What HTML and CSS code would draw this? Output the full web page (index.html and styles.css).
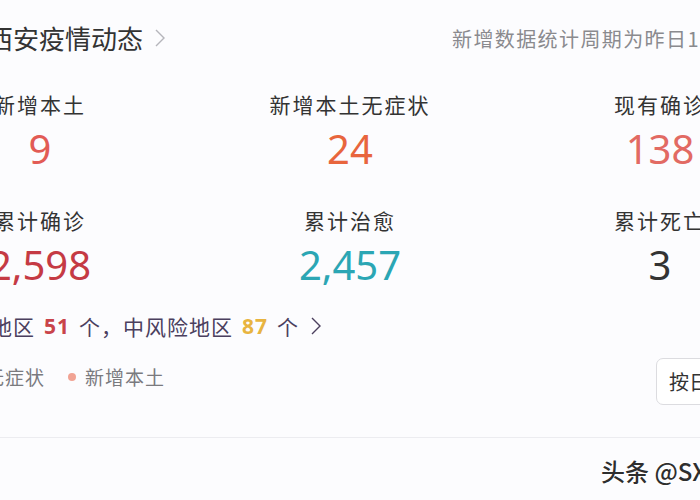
FILE: index.html
```html
<!DOCTYPE html>
<html lang="zh-CN">
<head>
  <meta charset="UTF-8" />
  <meta name="viewport" content="width=device-width, initial-scale=1.0"/>
  <title>西安疫情动态</title>
  <link rel="stylesheet" href="styles.css">
</head>
<body>
  <div class="page">
    <header class="head">
      <div class="title">
        西安疫情动态
        <svg class="chev" width="10" height="18" viewBox="0 0 10 18"><polyline points="1,1 9,9 1,17" fill="none" stroke="#b5b5bb" stroke-width="1.4"/></svg>
      </div>
      <div class="period">新增数据统计周期为昨日10时至今日10时</div>
    </header>

    <section class="stats">
      <div class="stat">
        <div class="label">新增本土</div>
        <div class="num red">9</div>
      </div>
      <div class="stat">
        <div class="label">新增本土无症状</div>
        <div class="num orange">24</div>
      </div>
      <div class="stat">
        <div class="label">现有确诊</div>
        <div class="num salmon">138</div>
      </div>
      <div class="stat">
        <div class="label">累计确诊</div>
        <div class="num dark-red">2,598</div>
      </div>
      <div class="stat">
        <div class="label">累计治愈</div>
        <div class="num teal">2,457</div>
      </div>
      <div class="stat">
        <div class="label">累计死亡</div>
        <div class="num gray">3</div>
      </div>
    </section>

    <div class="risk">
      高风险地区 <b class="high">51</b> 个，中风险地区 <b class="mid">87</b> 个
      <svg class="chev" width="10" height="18" viewBox="0 0 10 18"><polyline points="1,1 9,9 1,17" fill="none" stroke="#4b3f5e" stroke-width="1.4"/></svg>
    </div>

    <div class="chart-bar">
      <div class="legend">
        <span class="item"><i class="dot yellow"></i>新增无症状</span>
        <span class="item"><i class="dot pink"></i>新增本土</span>
      </div>
      <button class="switch">按日期</button>
    </div>

    <div class="divider"></div>
  </div>

  <div class="watermark">头条 @SXN</div>
</body>
</html>
```

FILE: styles.css
```css
body {
  margin: 0;
  width: 700px;
  height: 500px;
  overflow: hidden;
  position: relative;
  background: #fcfcfe;
  font-family: "Noto Sans CJK SC", "Noto Sans", sans-serif;
  color: #333;
}

.page {
  width: 700px;
}

.head {
  display: grid;
  grid-template-columns: 465px auto;
  align-items: center;
  margin: 18px 0 0 -13px;
  height: 40px;
  white-space: nowrap;
}

.title {
  display: flex;
  align-items: center;
  font-size: 26px;
  line-height: 40px;
  color: #333;
}

.title .chev {
  margin-left: 12px;
}

.period {
  font-size: 20px;
  letter-spacing: 1.4px;
  color: #8a8a8e;
}

.stats {
  display: grid;
  grid-template-columns: repeat(3, 310px);
  row-gap: 30px;
  margin: 31px 0 0 -115px;
  text-align: center;
  white-space: nowrap;
}

.label {
  font-size: 21px;
  line-height: 30px;
  letter-spacing: 2px;
  color: #333;
}

.num {
  font-family: "Noto Sans", sans-serif;
  font-size: 40px;
  line-height: 52px;
  margin-top: 4px;
}

.red { color: #e25b55; }
.orange { color: #e8653d; }
.salmon { color: #e26a63; }
.dark-red { color: #c53a44; }
.teal { color: #2ba6b4; }
.gray { color: #333; }

.risk {
  display: flex;
  align-items: center;
  margin: 20px 0 0 -75px;
  font-size: 21px;
  line-height: 30px;
  letter-spacing: 1px;
  color: #4b3f5e;
  white-space: nowrap;
}

.risk b {
  font-family: "Noto Sans", sans-serif;
  font-weight: bold;
  margin: 0 9px;
}

.risk .high { color: #c9444a; }
.risk .mid { color: #e8b440; }

.risk .chev {
  margin-left: 12px;
}

.chart-bar {
  display: flex;
  justify-content: space-between;
  align-items: flex-start;
  margin: 17px -60px 0 -72px;
  height: 47px;
}

.legend {
  display: flex;
  gap: 23px;
  margin-top: 4px;
  font-size: 19px;
  line-height: 30px;
  letter-spacing: 1px;
  color: #7a7a7e;
  white-space: nowrap;
}

.item {
  display: flex;
  align-items: center;
}

.dot {
  width: 8px;
  height: 8px;
  border-radius: 50%;
  margin-right: 9px;
}

.dot.yellow { background: #f3c46b; }
.dot.pink { background: #f1a394; }

.switch {
  height: 47px;
  width: 104px;
  padding: 0 0 0 12px;
  text-align: left;
  border: 1px solid #dcdce0;
  border-radius: 7px;
  background: #fff;
  font-family: "Noto Sans CJK SC", sans-serif;
  font-size: 20px;
  color: #333;
}

.divider {
  margin-top: 32px;
  height: 1px;
  background: #ececf0;
}

.watermark {
  position: absolute;
  left: 601px;
  top: 456px;
  font-size: 24px;
  font-weight: 500;
  line-height: 30px;
  white-space: nowrap;
  color: #2e2e2e;
  text-shadow: 0 0 2px #fff, 1px 1px 0 #fff, -1px -1px 0 #fff;
}
```
